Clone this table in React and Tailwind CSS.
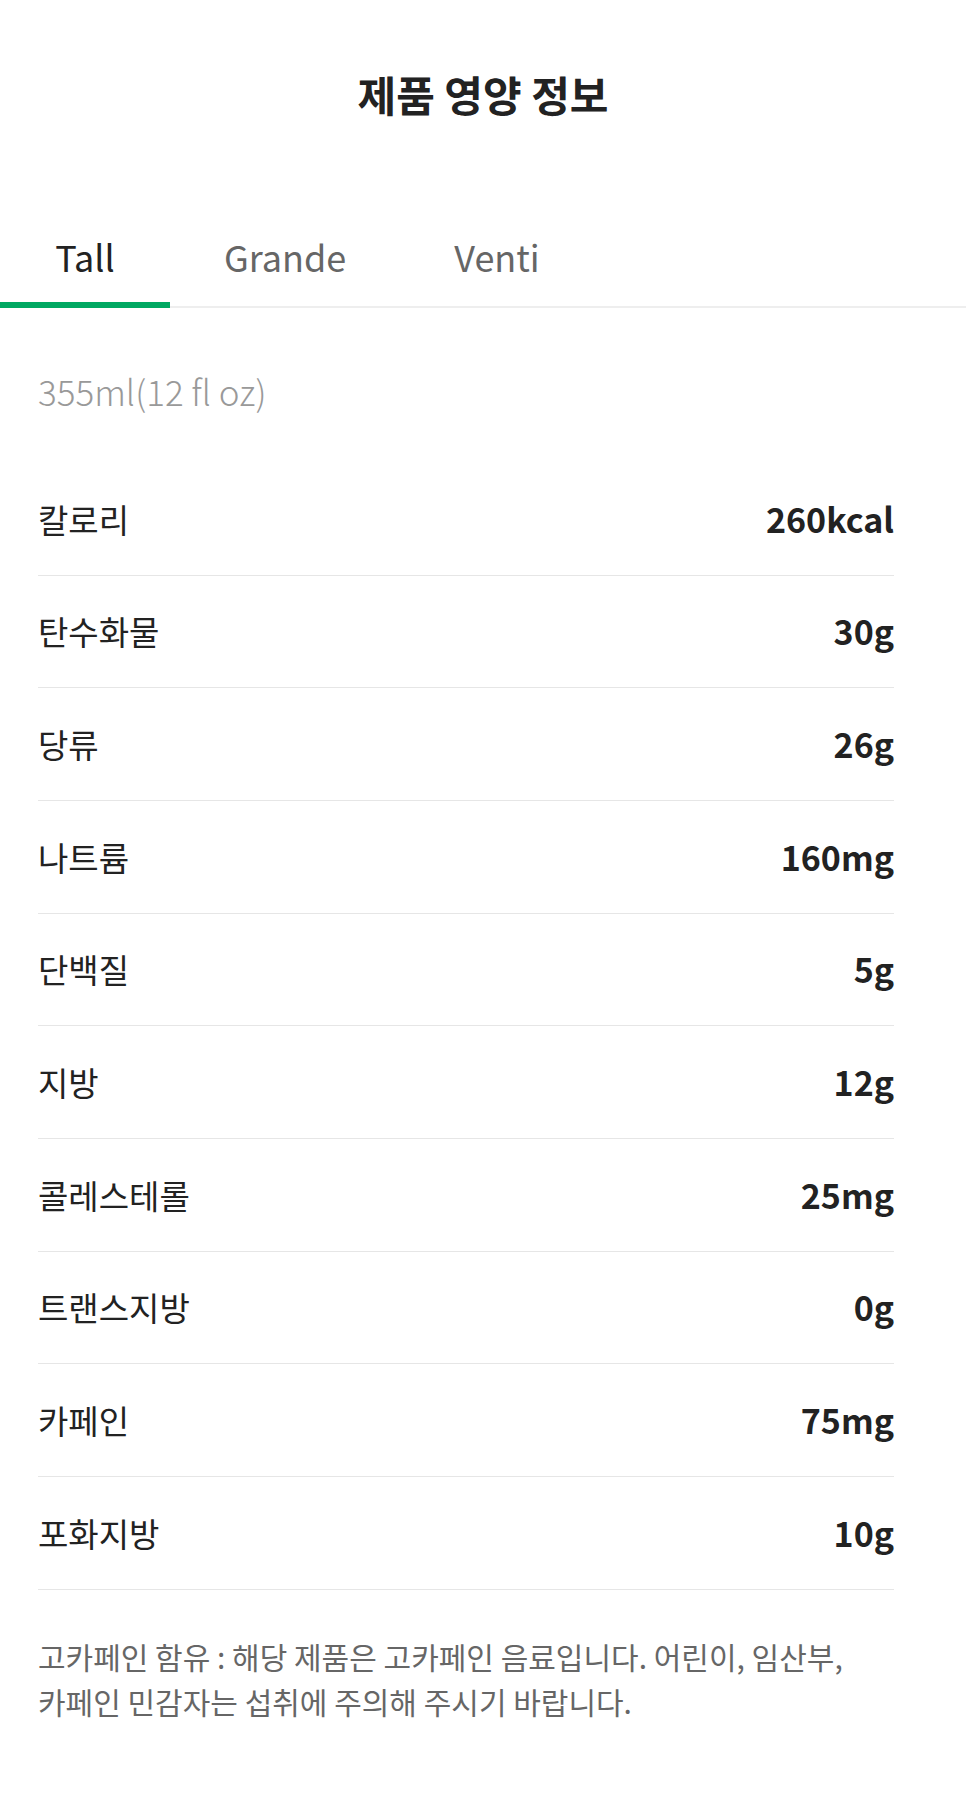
const sizes = ['Tall', 'Grande', 'Venti']

const nutrition = [
  { label: '칼로리', value: '260kcal' },
  { label: '탄수화물', value: '30g' },
  { label: '당류', value: '26g' },
  { label: '나트륨', value: '160mg' },
  { label: '단백질', value: '5g' },
  { label: '지방', value: '12g' },
  { label: '콜레스테롤', value: '25mg' },
  { label: '트랜스지방', value: '0g' },
  { label: '카페인', value: '75mg' },
  { label: '포화지방', value: '10g' },
]

export default function App() {
  const active = 'Tall'

  return (
    <div className="min-h-screen bg-white text-[#222] font-['Noto_Sans_CJK_KR','Noto_Sans',sans-serif]">
      {/* Header */}
      <div className="h-[188px] flex items-center justify-center">
        <h1 className="text-[42px] leading-[50px] font-bold text-[#222]">제품 영양 정보</h1>
      </div>

      {/* Size tabs */}
      <div className="flex border-b-2 border-[#eeeeee]">
        {sizes.map(size => (
          <button
            key={size}
            className={
              size === active
                ? 'min-w-[170px] px-[54px] pt-[44px] pb-[22px] -mb-[2px] text-[36px] leading-[48px] text-[#222] border-b-[6px] border-[#00a862]'
                : 'px-[54px] pt-[44px] pb-[22px] -mb-[2px] text-[36px] leading-[48px] text-[#666] border-b-[6px] border-transparent'
            }
          >
            {size}
          </button>
        ))}
      </div>

      <div className="pl-[38px] pr-[72px]">
        <p className="pt-[59px] text-[35px] leading-[48px] font-light text-[#999]">355ml(12 fl oz)</p>

        {/* Nutrition rows */}
        <div className="mt-[48px]">
          {nutrition.map(item => (
            <div key={item.label} className="h-[112.67px] flex items-center justify-between border-b border-[#e6e6e6]">
              <span className="text-[33px] leading-[40px] text-[#222]">{item.label}</span>
              <span className="text-[34px] leading-[40px] font-bold text-[#222]">{item.value}</span>
            </div>
          ))}
        </div>

        <p className="mt-[44px] text-[30px] leading-[45px] text-[#666]">
          고카페인 함유 : 해당 제품은 고카페인 음료입니다. 어린이, 임산부,
          <br />
          카페인 민감자는 섭취에 주의해 주시기 바랍니다.
        </p>
      </div>
    </div>
  )
}
